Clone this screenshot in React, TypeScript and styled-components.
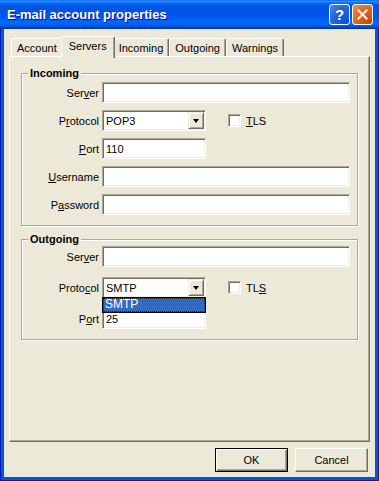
import React from 'react'
import styled, { createGlobalStyle } from 'styled-components'

const face = '#ECE9D8'
const shadow = '#ACA899'
const dark = '#716F64'
const light = '#F1EFE2'

const GlobalStyle = createGlobalStyle`
  html, body {
    margin: 0;
    padding: 0;
    background: #ffffff;
  }
  body {
    font-family: 'Liberation Sans', Arial, sans-serif;
    font-size: 11px;
    color: #000000;
  }
`

const Window = styled.div`
  width: 379px;
  height: 481px;
  display: flex;
  flex-direction: column;
  background: #0055e5;
  box-shadow: inset 1px 0 #0019b0, inset -1px 0 #001e9e, inset 0 -1px #001e9e;
`

const TitleBar = styled.div`
  height: 29px;
  flex: none;
  display: flex;
  align-items: center;
  padding: 0 6px 0 7px;
  background: linear-gradient(
    to bottom,
    #0058ee 0%,
    #3593ff 4%,
    #288eff 6%,
    #127dff 8%,
    #036ffc 10%,
    #0262ee 14%,
    #0057e5 20%,
    #0054e3 24%,
    #0055eb 56%,
    #005bf5 66%,
    #026afe 76%,
    #0062ef 86%,
    #0052d6 92%,
    #0040ab 96%,
    #003092 100%
  );
`

const Title = styled.div`
  flex: 1;
  color: #ffffff;
  font-family: 'Liberation Sans', Arial, sans-serif;
  font-weight: bold;
  font-size: 13px;
  text-shadow: 1px 1px #0f1089;
`

const CaptionButtons = styled.div`
  display: flex;
  gap: 2px;
`

const CaptionButton = styled.div<{ $kind: 'help' | 'close' }>`
  box-sizing: border-box;
  width: 21px;
  height: 21px;
  border: 1px solid #ffffff;
  border-radius: 3px;
  display: flex;
  align-items: center;
  justify-content: center;
  color: #ffffff;
  font-weight: bold;
  font-size: 15px;
  background: ${p =>
    p.$kind === 'close'
      ? 'radial-gradient(circle at 90% 90%, #cc4600 0%, #dc6527 55%, #e99370 100%)'
      : 'radial-gradient(circle at 90% 90%, #0054e9 0%, #2263d5 55%, #4d8bf5 100%)'};
`

const Frame = styled.div`
  flex: 1;
  margin: 0 4px 4px;
  padding: 7px 5px 0;
  background: ${face};
  display: flex;
  flex-direction: column;
`

const TabStrip = styled.div`
  height: 20px;
  flex: none;
  display: flex;
  align-items: flex-end;
  padding-left: 2px;
  position: relative;
  z-index: 1;
`

const Tab = styled.div<{ $active?: boolean }>`
  position: relative;
  box-sizing: border-box;
  height: ${p => (p.$active ? 22 : 18)}px;
  padding: ${p => (p.$active ? '0 7px 3px' : '0 5px')};
  margin: 0 ${p => (p.$active ? -2 : 0)}px ${p => (p.$active ? -2 : 0)}px;
  z-index: ${p => (p.$active ? 2 : 1)};
  background: ${face};
  border-top: 1px solid #ffffff;
  border-left: 1px solid #ffffff;
  border-right: 1px solid ${dark};
  border-top-left-radius: 2px;
  border-top-right-radius: 2px;
  box-shadow: inset -1px 0 ${shadow};
  display: flex;
  align-items: center;
  white-space: nowrap;
`

const Panel = styled.div`
  flex: 1;
  box-sizing: border-box;
  border: 1px solid;
  border-color: #ffffff ${dark} ${dark} #ffffff;
  box-shadow: inset -1px -1px ${shadow};
  padding-top: 10px;
  display: flex;
  flex-direction: column;
  gap: 7px;
`

const Group = styled.fieldset<{ $top: number }>`
  margin: 0 11px;
  padding: ${p => p.$top}px 7px 10px 0;
  border: 1px solid ${shadow};
  box-shadow: 1px 1px 0 #ffffff, inset 1px 1px 0 #ffffff;
  min-width: 0;
`

const Legend = styled.legend`
  margin-left: 6px;
  padding: 0 2px;
  font-weight: bold;
  line-height: 13px;
  background: ${face};
`

const Form = styled.div<{ $gap: number }>`
  display: grid;
  grid-template-columns: 77px 1fr;
  column-gap: 3px;
  row-gap: ${p => p.$gap}px;
  align-items: center;
`

const Label = styled.label`
  text-align: right;
  white-space: nowrap;
`

const Key = styled.span`
  text-decoration: underline;
`

const TextBox = styled.input<{ $w?: number }>`
  box-sizing: border-box;
  width: ${p => (p.$w ? `${p.$w}px` : '100%')};
  height: 21px;
  margin: 0;
  padding: 0 3px;
  background: #ffffff;
  border: 1px solid;
  border-color: ${shadow} #ffffff #ffffff ${shadow};
  box-shadow: inset 1px 1px ${dark}, inset -1px -1px ${light};
  font-family: 'Liberation Sans', Arial, sans-serif;
  font-size: 11px;
  color: #000000;
  outline: none;
`

const ControlRow = styled.div`
  display: flex;
  align-items: center;
  gap: 22px;
`

const Combo = styled.div`
  position: relative;
  box-sizing: border-box;
  width: 104px;
  height: 21px;
  padding: 1px;
  background: #ffffff;
  border: 1px solid;
  border-color: ${shadow} #ffffff #ffffff ${shadow};
  box-shadow: inset 1px 1px ${dark}, inset -1px -1px ${light};
  display: flex;
  align-items: stretch;
`

const ComboText = styled.div`
  flex: 1;
  display: flex;
  align-items: center;
  padding-left: 2px;
`

const DropButton = styled.div`
  box-sizing: border-box;
  width: 16px;
  background: ${face};
  border: 1px solid;
  border-color: ${light} ${dark} ${dark} ${light};
  box-shadow: inset 1px 1px #ffffff, inset -1px -1px ${shadow};
  display: flex;
  align-items: center;
  justify-content: center;

  &::after {
    content: '';
    border-left: 3px solid transparent;
    border-right: 3px solid transparent;
    border-top: 4px solid #000000;
    margin-top: 1px;
  }
`

const DropList = styled.div`
  position: absolute;
  left: -1px;
  right: -1px;
  top: 100%;
  box-sizing: border-box;
  height: 16px;
  border: 1px solid #000000;
  background: #ffffff;
  z-index: 5;
`

const DropItem = styled.div`
  height: 14px;
  box-sizing: border-box;
  background: #316ac5;
  color: #ffffff;
  font-size: 12px;
  line-height: 12px;
  padding-left: 2px;
  outline: 1px dotted #1a1a1a;
  outline-offset: -1px;
`

const Check = styled.label`
  display: flex;
  align-items: center;
  gap: 5px;
`

const CheckBox = styled.span`
  box-sizing: border-box;
  width: 13px;
  height: 13px;
  background: #ffffff;
  border: 1px solid;
  border-color: ${shadow} #ffffff #ffffff ${shadow};
  box-shadow: inset 1px 1px ${dark}, inset -1px -1px ${light};
`

const Footer = styled.div`
  height: 35px;
  flex: none;
  box-sizing: border-box;
  display: flex;
  justify-content: flex-end;
  align-items: flex-start;
  gap: 7px;
  padding: 6px 2px 0 0;
`

const Button = styled.button<{ $default?: boolean }>`
  box-sizing: border-box;
  width: 73px;
  height: 24px;
  margin: 0;
  padding: 0;
  background: ${face};
  font-family: 'Liberation Sans', Arial, sans-serif;
  font-size: 11px;
  color: #000000;
  border: 1px solid;
  border-color: ${p => (p.$default ? '#000000' : `#ffffff ${dark} ${dark} #ffffff`)};
  box-shadow: ${p =>
    p.$default
      ? `inset 1px 1px #ffffff, inset -1px -1px ${dark}, inset -2px -2px ${shadow}`
      : `inset -1px -1px ${shadow}`};
`

const CloseGlyph = () => (
  <svg width="11" height="11" viewBox="0 0 11 11">
    <path d="M1.5 1.5 L9.5 9.5 M9.5 1.5 L1.5 9.5" stroke="#ffffff" strokeWidth="2" strokeLinecap="square" />
  </svg>
)

type Labels = {
  server: React.ReactNode
  protocol: React.ReactNode
  port: React.ReactNode
  tls: React.ReactNode
}

const ProtocolBox = ({ value, open }: { value: string; open?: boolean }) => (
  <Combo>
    <ComboText>{value}</ComboText>
    <DropButton />
    {open && (
      <DropList>
        <DropItem>{value}</DropItem>
      </DropList>
    )}
  </Combo>
)

const ServerFields = ({
  labels,
  protocol,
  port,
  open,
}: {
  labels: Labels
  protocol: string
  port: string
  open?: boolean
}) => (
  <>
    <Label>{labels.server}</Label>
    <TextBox defaultValue="" />
    <Label>{labels.protocol}</Label>
    <ControlRow>
      <ProtocolBox value={protocol} open={open} />
      <Check>
        <CheckBox />
        <span>{labels.tls}</span>
      </Check>
    </ControlRow>
    <Label>{labels.port}</Label>
    <TextBox $w={104} defaultValue={port} />
  </>
)

const App = () => {
  return (
    <>
      <GlobalStyle />
      <Window>
        <TitleBar>
          <Title>E-mail account properties</Title>
          <CaptionButtons>
            <CaptionButton $kind="help">?</CaptionButton>
            <CaptionButton $kind="close">
              <CloseGlyph />
            </CaptionButton>
          </CaptionButtons>
        </TitleBar>
        <Frame>
          <TabStrip>
            <Tab>Account</Tab>
            <Tab $active>Servers</Tab>
            <Tab>Incoming</Tab>
            <Tab>Outgoing</Tab>
            <Tab>Warnings</Tab>
          </TabStrip>
          <Panel>
            <Group $top={2}>
              <Legend>Incoming</Legend>
              <Form $gap={7}>
                <ServerFields
                  labels={{
                    server: <>Ser<Key>v</Key>er</>,
                    protocol: <>P<Key>r</Key>otocol</>,
                    port: <><Key>P</Key>ort</>,
                    tls: <><Key>T</Key>LS</>,
                  }}
                  protocol="POP3"
                  port="110"
                />
                <Label><Key>U</Key>sername</Label>
                <TextBox defaultValue="" />
                <Label>P<Key>a</Key>ssword</Label>
                <TextBox type="password" defaultValue="" />
              </Form>
            </Group>
            <Group $top={0}>
              <Legend>Outgoing</Legend>
              <Form $gap={10}>
                <ServerFields
                  labels={{
                    server: <>Ser<Key>v</Key>er</>,
                    protocol: <>Proto<Key>c</Key>ol</>,
                    port: <>P<Key>o</Key>rt</>,
                    tls: <>TL<Key>S</Key></>,
                  }}
                  protocol="SMTP"
                  port="25"
                  open
                />
              </Form>
            </Group>
          </Panel>
          <Footer>
            <Button $default>OK</Button>
            <Button>Cancel</Button>
          </Footer>
        </Frame>
      </Window>
    </>
  )
}

export default App
